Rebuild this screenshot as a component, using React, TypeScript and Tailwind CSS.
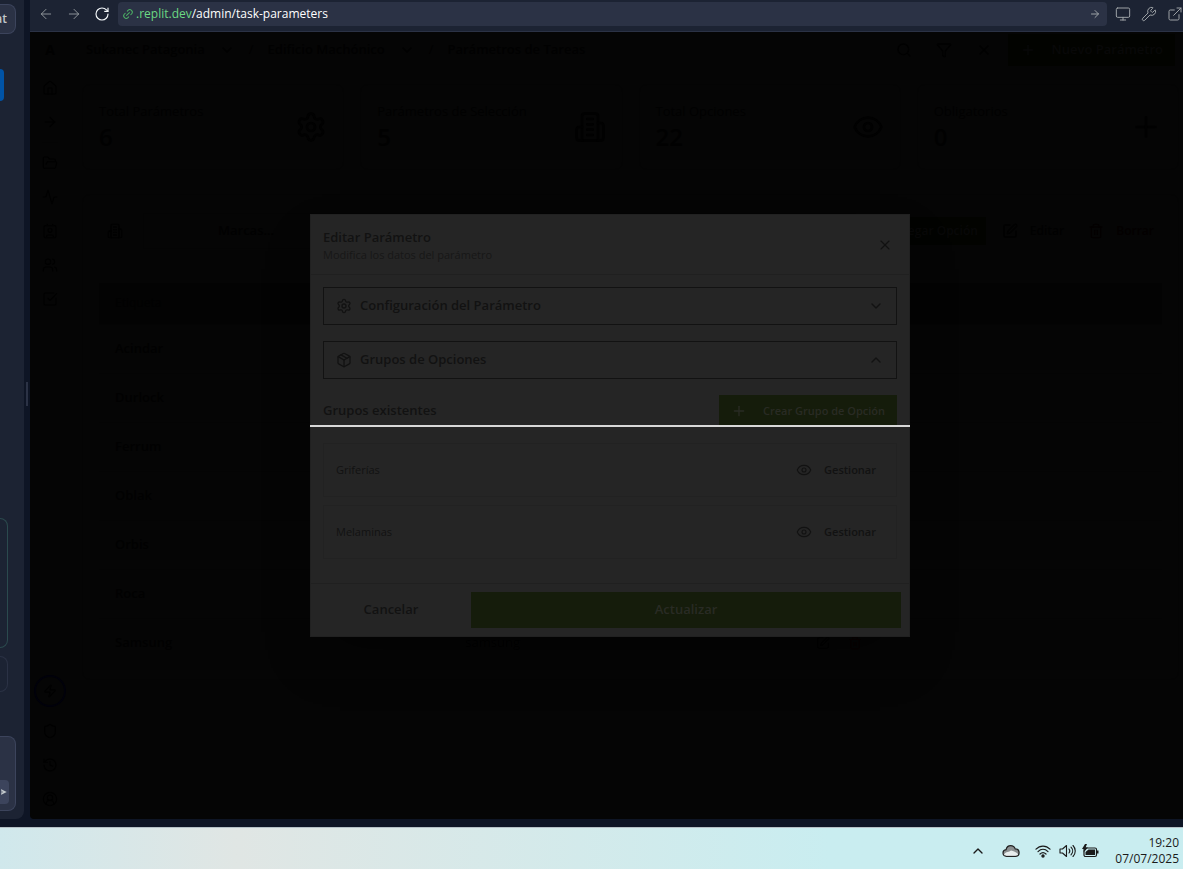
import React from "react";
import {
  ArrowLeft, ArrowRight, RotateCw, Link2, Monitor, Wrench, ExternalLink, House, FolderOpen, Activity, Contact, Users,
  SquareCheckBig, Zap, Shield, History, CircleUserRound, ChevronDown, ChevronUp, Search, Funnel, X, Plus, Settings,
  Eye, SquarePen, Trash2, Package,
} from "lucide-react";

const stroke = { fill: "none", stroke: "currentColor", strokeLinecap: "round", strokeLinejoin: "round" } as const;

function Building({ className, width = 2 }: { className?: string; width?: number }) {
  return (
    <svg viewBox="0 0 24 24" className={className} strokeWidth={width} {...stroke}>
      <path d="M6 22V4a2 2 0 0 1 2-2h8a2 2 0 0 1 2 2v18Z" />
      <path d="M6 12H4a2 2 0 0 0-2 2v6a2 2 0 0 0 2 2h2M18 9h2a2 2 0 0 1 2 2v9a2 2 0 0 1-2 2h-2" />
      <path d="M10 6h4M10 10h4M10 14h4M10 18h4" />
    </svg>
  );
}

const stats = [
  { label: "Total Parámetros", value: "6", icon: <Settings className="size-8" /> },
  { label: "Parámetros de Selección", value: "5", icon: <Building className="size-8" /> },
  { label: "Total Opciones", value: "22", icon: <Eye className="size-8" /> },
  { label: "Obligatorios", value: "0", icon: <Plus className="size-8" /> },
];

const options = [
  { label: "Acindar" }, { label: "Durlock" }, { label: "Ferrum" }, { label: "Oblak" }, { label: "Orbis" },
  { label: "Roca" }, { label: "Samsung", name: "samsung" },
];

const navTop = [{ name: "Inicio", Icon: House }, { name: "Avanzar", Icon: ArrowRight }];
const navMain = [
  { name: "Proyectos", Icon: FolderOpen }, { name: "Actividad", Icon: Activity }, { name: "Contactos", Icon: Contact },
  { name: "Equipo", Icon: Users }, { name: "Tareas", Icon: SquareCheckBig },
];
const navBottom = [
  { name: "Seguridad", Icon: Shield }, { name: "Historial", Icon: History }, { name: "Perfil", Icon: CircleUserRound },
];

function ChatEdge() {
  return (
    <aside className="flex w-6 shrink-0 flex-col rounded-br-lg bg-[#1c2333]">
      <button className="mt-1 flex h-[30px] w-4 items-center justify-end rounded-r-lg border border-l-0 border-[#3c445c] bg-[#2b3245] pr-2 text-xs font-semibold text-[#c2c8cc]">
        at
      </button>
      <div className="mt-[35px] h-8 w-1 rounded-r bg-[#0053a6]" />
      <div className="mt-auto h-[130px] w-2 rounded-r-lg border border-l-0 border-[#2b4a4e]" />
      <div className="mt-2 h-9 w-2 rounded-r-lg border border-l-0 border-[#2b3245]" />
      <div className="mt-11 mb-2 flex h-[75px] w-4 items-end rounded-r-lg border border-l-0 border-[#3c445c] bg-[#2b3245] pb-1.5">
        <button aria-label="Enviar" className="flex h-6 w-[9px] items-center justify-center rounded-r bg-[#3c445c] text-[#c2c8cc]">
          <svg viewBox="0 0 9 12" className="h-3 w-2" fill="none" stroke="currentColor" strokeWidth="1.3">
            <path d="M0 3.500 5 6 0 8.500M0 6h5" />
          </svg>
        </button>
      </div>
    </aside>
  );
}

function AddressBar() {
  return (
    <header className="flex h-8 shrink-0 items-center border-b border-[#2b3245] bg-[#1c2333] pl-2 pb-[3px] text-[#9da2a6]">
      <button aria-label="Atrás" className="mr-3"><ArrowLeft className="size-4" strokeWidth={1.3} /></button>
      <button aria-label="Adelante" className="mr-3"><ArrowRight className="size-4" strokeWidth={1.3} /></button>
      <button aria-label="Recargar" className="mr-2 text-[#f5f9fc]"><RotateCw className="size-4" strokeWidth={1.7} /></button>
      <a href="#address" className="flex h-6 flex-1 items-center rounded bg-[#2b3245] px-1 text-xs text-white">
        <Link2 className="mr-0.5 size-3 -rotate-45 text-[#4caf64]" />
        <span className="text-[#6bd983]">.replit.dev</span>/admin/task-parameters
        <ArrowRight className="mr-0.5 ml-auto size-3 text-[#9da2a6]" />
      </a>
      <div className="ml-2 flex items-center gap-2.5">
        <button aria-label="Dispositivo"><Monitor className="size-4" strokeWidth={1.5} /></button>
        <button aria-label="Herramientas"><Wrench className="size-4" strokeWidth={1.5} /></button>
        <button aria-label="Abrir en pestaña nueva"><ExternalLink className="size-4" strokeWidth={1.5} /></button>
      </div>
    </header>
  );
}

function NavGroup({ items }: { items: typeof navTop }) {
  return (
    <div className="flex flex-col gap-[18px]">
      {items.map(({ name, Icon }) => (
        <button key={name} aria-label={name}><Icon className="size-4" strokeWidth={1.7} /></button>
      ))}
    </div>
  );
}

function Sidebar() {
  return (
    <nav className="flex w-10 shrink-0 flex-col items-center pt-2 pb-3 text-[#010101]">
      <b className="mb-5 text-sm">A</b>
      <NavGroup items={navTop} />
      <div className="my-3 h-px w-4 bg-[#040404]" />
      <NavGroup items={navMain} />
      <button aria-label="Acciones" className="mt-auto mb-4 flex size-8 items-center justify-center rounded-full border-2 border-[#01010a]">
        <Zap className="size-3.5" />
      </button>
      <NavGroup items={navBottom} />
    </nav>
  );
}

function PageHeader() {
  return (
    <div className="flex h-9 items-center gap-3.5 pl-4 pr-2 text-[13px] font-semibold">
      <span>Sukanec Patagonia</span>
      <ChevronDown className="size-4" />
      <span className="font-normal">/</span>
      <span>Edificio Machónico</span>
      <ChevronDown className="size-4" />
      <span className="font-normal">/</span>
      <span>Parámetros de Tareas</span>
      <div className="ml-auto flex items-center gap-6">
        <button aria-label="Buscar"><Search className="size-4" /></button>
        <button aria-label="Filtrar"><Funnel className="size-4" /></button>
        <button aria-label="Limpiar"><X className="size-4" /></button>
        <button className="-ml-2 flex h-8 items-center gap-4 bg-[#020300] px-3 text-[#080808]">
          <Plus className="size-4" />
          Nuevo Parámetro
        </button>
      </div>
    </div>
  );
}

function ParametersPage() {
  return (
    <main className="flex min-w-0 flex-1 flex-col">
      <PageHeader />
      <section className="mt-4 mr-1 ml-3 grid grid-cols-4 gap-4">
        {stats.map((s) => (
          <div key={s.label} className="flex h-[86px] items-center justify-between rounded-lg border border-[#040404] px-4">
            <div>
              <div className="text-[13px] leading-5">{s.label}</div>
              <div className="text-2xl leading-8 font-semibold">{s.value}</div>
            </div>
            {s.icon}
          </div>
        ))}
      </section>
      <section className="mt-6 mr-1 ml-3 rounded-lg border border-[#040404] px-4 pt-[18px] pb-3">
        <div className="flex h-9 items-center text-[13px] font-semibold">
          <Building className="mx-2 size-4" />
          <span className="ml-3 flex h-9 flex-1 items-center border border-[#040404] pl-[74px]">Marcas...</span>
          <div className="flex shrink-0 items-center gap-2 text-xs">
            <button className="flex h-7 items-center gap-2 bg-[#020300] px-2 text-[#080808]"><Plus className="size-4" />Agregar Opción</button>
            <button className="flex items-center gap-3 px-2"><SquarePen className="size-4" />Editar</button>
            <button className="flex items-center gap-3 px-2 text-[#030000]"><Trash2 className="size-4" />Borrar</button>
          </div>
        </div>
        <table className="mt-[34px] w-full text-left text-[13px]">
          <thead>
            <tr className="h-[41px] bg-[#030303] text-xs">
              <th className="w-1/3 px-4 font-normal">Etiqueta <span className="text-[#040404]">↑</span></th>
              <th />
              <th className="w-1/3" />
            </tr>
          </thead>
          <tbody>
            {options.map((o) => (
              <tr key={o.label} className="h-[49px] border-t border-[#040404]">
                <td className="px-4 font-semibold">{o.label}</td>
                <td className="pl-3">{o.name}</td>
                <td>
                  <div className="flex gap-[18px] pl-2">
                    <button aria-label={`Editar ${o.label}`}><SquarePen className="size-3.5" /></button>
                    <button aria-label={`Borrar ${o.label}`} className="text-[#080000]"><Trash2 className="size-3.5" /></button>
                  </div>
                </td>
              </tr>
            ))}
          </tbody>
        </table>
      </section>
    </main>
  );
}

function EditDialog() {
  return (
    <div role="dialog" aria-labelledby="dialog-title" className="relative w-[600px] border border-[#212121] bg-[#252525] text-[#121212] shadow-[0_25px_50px_-12px_rgba(0,0,0,0.4)]">
      <div className="flex h-[60px] items-center justify-between border-b border-[#202020] px-3">
        <div>
          <h2 id="dialog-title" className="text-[13px] leading-5 font-semibold">Editar Parámetro</h2>
          <p className="text-[11px] leading-4 text-[#171717]">Modifica los datos del parámetro</p>
        </div>
        <button aria-label="Cerrar" className="mr-1"><X className="size-4" strokeWidth={1.7} /></button>
      </div>
      <div className="px-3 pt-3 pb-6">
        <button className="flex h-[38px] w-full items-center gap-2 border border-[#121212] px-3 text-[13px] font-semibold">
          <Settings className="size-4" />
          Configuración del Parámetro
          <ChevronDown className="mr-0 ml-auto size-4" />
        </button>
        <button className="mt-4 flex h-[38px] w-full items-center gap-2 border border-[#121212] px-3 text-[13px] font-semibold">
          <Package className="size-4" />
          Grupos de Opciones
          <ChevronUp className="mr-0 ml-auto size-4" />
        </button>
        <div className="mt-4 flex h-8 items-center justify-between">
          <h3 className="text-[13px] font-semibold">Grupos existentes</h3>
          <button className="flex h-8 items-center gap-4 bg-[#151c0b] px-3 text-[11px] font-semibold text-[#292b24]">
            <Plus className="size-4" />
            Crear Grupo de Opción
          </button>
        </div>
        <ul className="mt-4 flex flex-col gap-2">
          {["Griferías", "Melaminas"].map((g) => (
            <li key={g} className="flex h-[54px] items-center justify-between border border-[#222222] pr-5 pl-3 text-[11px]">
              {g}
              <button className="flex items-center gap-3 font-semibold"><Eye className="size-4" strokeWidth={1.7} />Gestionar</button>
            </li>
          ))}
        </ul>
      </div>
      <div className="flex gap-2 border-t border-[#202020] p-2 text-[13px] font-semibold">
        <button className="h-9 flex-1">Cancelar</button>
        <button className="h-9 w-[430px] bg-[#151c0b] text-[#292b24]">Actualizar</button>
      </div>
      <div className="absolute top-1/2 -right-px -left-px h-0.5 -translate-y-1/2 bg-[#d8d8d8]" />
    </div>
  );
}

function Taskbar() {
  return (
    <footer className="flex h-[42px] shrink-0 items-center justify-end border-t border-[#b5c0c6] bg-linear-to-r from-[#d0e8ec] via-[#e0e6e4] via-20% to-[#c9edf0] to-70% pt-1 pr-1 text-[#1a1a1a]">
      <ChevronUp className="mr-4 size-4" strokeWidth={2} />
      <svg viewBox="0 0 18 14" className="mr-[15px] h-3.5 w-[18px]" strokeWidth="1.2">
        <path d="M4.5 12.3C2.2 12.3 1 10.8 1 9s1.3-3.1 3.1-3.3C4.6 3.2 6.3 1.7 8.7 1.7c2.2 0 3.8 1.2 4.500 3.2 2.3.1 3.900 1.7 3.900 3.8 0 2.2-1.500 3.600-3.700 3.600Z" fill="#8b8f90" stroke="#222" />
        <path d="M2 10.500C4 7.500 7 8.500 9 6.600c2.500.3 5.500 1.8 7.2 3.600-.5 1-1.500 1.500-2.8 1.500H4.500c-1.100 0-2-.4-2.500-1.200Z" fill="#e9eeee" />
      </svg>
      <svg viewBox="0 0 16 14" className="mr-2 h-3.5 w-4" strokeWidth="1.2" {...stroke}>
        <path d="M1 5.2c4-4.2 10-4.2 14 0M3 7.6c3-3 7-3 10 0M5 10c2-1.8 4-1.8 6 0" />
        <circle cx="8" cy="12" r="1.1" fill="currentColor" />
      </svg>
      <svg viewBox="0 0 17 14" className="mr-1.5 h-3.5 w-[17px]" strokeWidth="1.1" {...stroke}>
        <path d="M1 5v4h2.5L7.5 12.5v-11L3.500 5ZM10 5c1 1.200 1 2.800 0 4M12 3.200c2.200 2.200 2.200 5.400 0 7.600M14 1.500c3 3.200 3 7.800 0 11" />
      </svg>
      <svg viewBox="0 0 17 14" className="mr-4 h-3.5 w-[17px]">
        <rect x="2" y="4" width="12.500" height="8.500" rx="1.500" fill="none" stroke="currentColor" strokeWidth="1.2" />
        <path d="M3.500 8 6.500 5.500h6.500v5.500H3.500ZM15 6.500h1.500v3H15Z" fill="currentColor" />
        <path d="M3 0 0 5h2.200L1.500 8.500 6 3.500H3.600L5 0Z" fill="currentColor" />
      </svg>
      <div className="text-right text-xs leading-4">
        <div>19:20</div>
        <div>07/07/2025</div>
      </div>
    </footer>
  );
}

export default function App() {
  return (
    <div className="flex h-screen flex-col overflow-hidden bg-[#0e1525] font-['Open_Sans','Noto_Sans',sans-serif]">
      <div className="flex min-h-0 flex-1 gap-1.5 pb-2">
        <ChatEdge />
        <div className="flex min-w-0 flex-1 flex-col">
          <AddressBar />
          <div className="relative flex min-h-0 flex-1 rounded-bl bg-[#050505] text-[#010101]">
            <div className="absolute top-1/2 -left-1 h-6 w-0.5 -translate-y-11 bg-[#2b3245]" />
            <Sidebar />
            <ParametersPage />
            <div className="absolute inset-0 flex items-center justify-center pl-[7px]">
              <EditDialog />
            </div>
          </div>
        </div>
      </div>
      <Taskbar />
    </div>
  );
}
